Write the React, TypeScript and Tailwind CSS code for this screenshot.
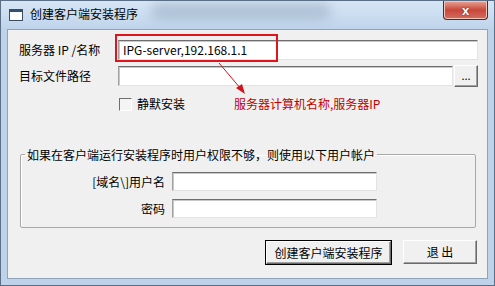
import React from "react";

function Field({ className = "" }: { className?: string }) {
  return (
    <div
      className={`bg-white border border-t-[#6e6e6e] border-l-[#a0a0a0] border-r-[#e3e3e3] border-b-[#e3e3e3] shadow-[inset_1px_1px_0_#c8c8c8] ${className}`}
    />
  );
}

function WinButton({
  children,
  isDefault,
  className = "",
}: {
  children: React.ReactNode;
  isDefault?: boolean;
  className?: string;
}) {
  return (
    <div className={`${isDefault ? "border border-black" : ""} ${className}`}>
      <div className="h-full flex items-center justify-center bg-[#f0f0f0] border border-t-white border-l-white border-r-[#6a6a6a] border-b-[#6a6a6a] shadow-[inset_-1px_-1px_0_#a0a0a0]">
        {children}
      </div>
    </div>
  );
}

export default function App() {
  return (
    <div className="w-[495px] h-[286px] flex flex-col bg-[#bed3ea] text-[12px] leading-[14px] text-black overflow-hidden font-['Noto_Sans_CJK_SC','Liberation_Sans',sans-serif] border border-[#5a6f86]">
      {/* title bar */}
      <div className="relative h-[28px] flex items-start pl-[8px] bg-gradient-to-b from-[#d7e6f5] to-[#bfd4eb]">
        <div className="absolute left-[150px] top-[2px] w-[180px] h-[16px] rounded-full bg-[#7d93ab]/40 blur-[6px]" />
        <div className="relative mt-[8px] w-[14px] h-[12px] bg-white border border-[#3c4b5c] border-t-[3px] border-t-[#33506e]" />
        <span className="relative ml-[7px] mt-[6px] text-[12px]">创建客户端安装程序</span>
        <div className="relative ml-auto mr-[6px] w-[45px] h-[19px] rounded-b-[4px] border border-t-0 border-[#5b2424] bg-gradient-to-b from-[#e6a496] via-[#c8473a] to-[#d26d5e] flex items-center justify-center shadow-[inset_0_0_0_1px_#f2c3b8]">
          <span className="text-white font-bold text-[13px] leading-none font-['Liberation_Sans',sans-serif] [text-shadow:0_0_2px_#6b1a12]">x</span>
        </div>
      </div>

      {/* client area */}
      <div className="relative mx-[6px] h-[250px] bg-[#f0f0f0] border border-[#8fa3b9] pt-[10px] pr-[9px] pl-[11px]">
        {/* row 1 */}
        <div className="flex items-center h-[20px]">
          <span className="w-[99px] shrink-0">服务器 IP /名称</span>
          <div className="flex-1 h-[20px] bg-white border border-t-[#6e6e6e] border-l-[#a0a0a0] border-r-[#e3e3e3] border-b-[#e3e3e3] shadow-[inset_1px_1px_0_#c8c8c8] flex items-center pl-[4px]">
            IPG-server,192.168.1.1
          </div>
        </div>

        {/* row 2 */}
        <div className="flex items-center h-[22px] mt-[5px]">
          <span className="w-[99px] shrink-0">目标文件路径</span>
          <Field className="flex-1 h-[20px]" />
          <WinButton className="w-[24px] h-[22px] ml-[1px]">
            <span className="text-[11px] leading-none -mt-[2px]">...</span>
          </WinButton>
        </div>

        {/* checkbox row */}
        <div className="flex items-center h-[14px] mt-[10px] pl-[100px]">
          <div className="w-[13px] h-[13px] bg-[#f4f4f4] border border-t-[#6e6e6e] border-l-[#6e6e6e] border-r-white border-b-white" />
          <span className="ml-[5px]">静默安装</span>
          <span className="ml-[49px] text-[#c00000]">服务器计算机名称,服务器IP</span>
        </div>

        {/* group box */}
        <fieldset className="mt-[37px] ml-[1px] mr-[2px] h-[80px] border border-[#a8a8a8] rounded-[2px] pt-[11px] shadow-[inset_1px_1px_0_#ffffff]">
          <legend className="ml-[4px] px-[2px] leading-[13px]">
            如果在客户端运行安装程序时用户权限不够，则使用以下用户帐户
          </legend>
          <div className="flex items-center h-[19px]">
            <span className="w-[151px] shrink-0 text-right pr-[7px]">[域名\]用户名</span>
            <Field className="w-[205px] h-[19px]" />
          </div>
          <div className="flex items-center h-[19px] mt-[8px]">
            <span className="w-[151px] shrink-0 text-right pr-[7px]">密码</span>
            <Field className="w-[205px] h-[19px]" />
          </div>
        </fieldset>

        {/* buttons */}
        <div className="flex justify-end gap-[11px] mt-[12px] pr-[1px]">
          <WinButton isDefault className="w-[127px] h-[25px]">
            创建客户端安装程序
          </WinButton>
          <WinButton className="w-[74px] h-[24px]">退 出</WinButton>
        </div>

        {/* annotation */}
        <div className="absolute left-[107px] top-[4px] w-[163px] h-[28px] border-2 border-[#e0141c]" />
        <svg className="absolute left-0 top-0" width="300" height="80">
          <line x1="211" y1="33" x2="233" y2="59" stroke="#d0141c" strokeWidth="1" />
          <polygon points="237,64 228,58 234,54" fill="#d0141c" />
        </svg>
      </div>
      <div className="flex-1" />
    </div>
  );
}
